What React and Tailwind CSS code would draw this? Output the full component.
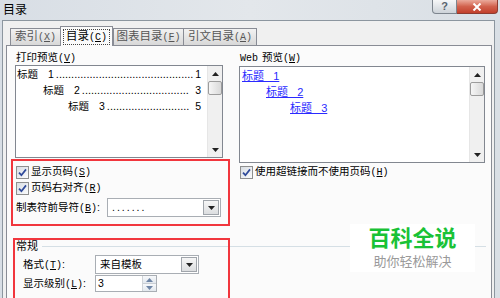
import React from "react";

function Mn({ k }) {
  return (
    <span className="font-['Liberation_Mono',monospace] text-[10px]">
      (<span className="underline">{k}</span>)
    </span>
  );
}

function Check() {
  return (
    <span className="w-[13px] h-[13px] shrink-0 border border-[#8e8f8f] bg-gradient-to-br from-[#d8dde3] to-[#fbfcfd] flex items-center justify-center">
      <svg width="9" height="9" viewBox="0 0 9 9">
        <path d="M1 4.6 L3.4 7.2 L8 1.4" fill="none" stroke="#2f4a9a" strokeWidth="1.7" />
      </svg>
    </span>
  );
}

function Tri({ down = true, color = "#222" }) {
  return (
    <svg width="7" height="4" viewBox="0 0 7 4">
      <path d={down ? "M0 0H7L3.5 4Z" : "M0 4H7L3.5 0Z"} fill={color} />
    </svg>
  );
}

function VScroll() {
  return (
    <div className="w-[15px] shrink-0 bg-[#f0f0f0] border-l border-[#e6e6e6] flex flex-col items-center">
      <div className="h-[15px] flex items-center justify-center">
        <Tri down={false} />
      </div>
      <div className="w-[14px] h-[14px] border border-[#9c9c9c] rounded-[2px] bg-gradient-to-r from-[#f6f6f6] to-[#d9d9d9]" />
      <div className="flex-1" />
      <div className="h-[15px] flex items-center justify-center">
        <Tri />
      </div>
    </div>
  );
}

function Combo({ className, text, textClass = "" }) {
  return (
    <div className={"h-[19px] border border-[#a9aeb4] bg-white flex " + className}>
      <div className={"flex-1 min-w-0 pl-[4px] flex items-center leading-none whitespace-nowrap " + textClass}>{text}</div>
      <div className="w-[16px] m-[1px] border border-[#a0a5ab] bg-gradient-to-b from-[#f6f6f6] to-[#dcdee0] flex items-center justify-center">
        <Tri />
      </div>
    </div>
  );
}

function PreviewRow({ pad, n, page, dots }) {
  return (
    <div className={"flex whitespace-nowrap " + pad}>
      <span>标题</span>
      <span className="ml-[10px]">{n}</span>
      <span className="ml-[2px] text-[11px]">{".".repeat(dots)}</span>
      <span className="ml-auto">{page}</span>
    </div>
  );
}

function Tab({ children, w, active, edge }) {
  if (active) {
    return (
      <div className={"relative z-10 h-[20px] mb-[-1px] border border-b-0 border-[#898c95] bg-[#fbfbfb] flex items-center justify-center " + w}>
        <span className="border border-dotted border-[#444] px-[2px] leading-[13px] text-black">{children}</span>
      </div>
    );
  }
  return (
    <div className={"h-[17px] border-t border-l border-[#898c95] bg-gradient-to-b from-[#f2f2f2] to-[#d8d8d8] flex items-center justify-center text-[#555] " + w + " " + edge}>
      {children}
    </div>
  );
}

export default function App() {
  return (
    <div className="w-[500px] h-[298px] overflow-hidden flex flex-col bg-gradient-to-r from-[#d8dee5] via-[#e3e7eb] to-[#d9dfe5] font-['Liberation_Sans','Noto_Sans_CJK_SC',sans-serif] text-[10.5px] text-black">
      {/* title bar */}
      <div className="h-[20px] shrink-0 flex justify-between">
        <div className="pl-[3px] pt-[3px] leading-[14px] text-[12px]">目录</div>
        <div className="flex pr-[2px] h-[14px]">
          <div className="w-[25px] h-[14px] rounded-bl-[4px] border border-t-0 border-[#7d858e] bg-gradient-to-b from-[#f6f7f8] to-[#cdd3d9] flex items-center justify-center text-[11px] leading-none text-[#59636e] font-bold">
            ?
          </div>
          <div className="w-[41px] h-[14px] rounded-br-[4px] border border-t-0 border-l-0 border-[#8d3b30] bg-gradient-to-b from-[#eaaa9c] via-[#d1614d] to-[#c23f2b] flex items-center justify-center">
            <svg width="10" height="8" viewBox="0 0 10 8">
              <path d="M1.5 0.5 L8.5 7.5 M8.5 0.5 L1.5 7.5" stroke="#fff" strokeWidth="2" />
            </svg>
          </div>
        </div>
      </div>

      {/* dialog body */}
      <div className="flex-1 min-h-0 ml-[2px] w-[493px] border-l border-t border-r border-[#8c969f] bg-[#f0f0f0] flex flex-col">
        {/* tab strip */}
        <div className="h-[24px] shrink-0 flex items-end pl-[7px] text-[11.5px]">
          <Tab w="w-[50px]">
            索引<Mn k="X" />
          </Tab>
          <Tab w="w-[53px]" active>
            目录<Mn k="C" />
          </Tab>
          <Tab w="w-[70px]">
            图表目录<Mn k="F" />
          </Tab>
          <Tab w="w-[74px]" edge="border-r">
            引文目录<Mn k="A" />
          </Tab>
        </div>

        {/* tab panel */}
        <div className="relative ml-[3px] w-[486px] flex-1 border border-[#898c95] bg-[#fbfbfb] flex flex-col">
          <div className="flex">
            {/* left column */}
            <div className="ml-[4px] w-[219px] flex flex-col">
              <div className="pl-[5px] mt-[4px] h-[14px] leading-[14px]">
                打印预览<Mn k="V" />
              </div>
              <div className="ml-[4px] mt-[1px] w-[208px] h-[93px] border border-[#828790] bg-white flex">
                <div className="flex-1 min-w-0 overflow-hidden pl-[1px] pr-[6px] leading-[16px]">
                  <PreviewRow pad="pl-0" n="1" page="1" dots={45} />
                  <PreviewRow pad="pl-[26px]" n="2" page="3" dots={35} />
                  <PreviewRow pad="pl-[51px]" n="3" page="5" dots={27} />
                </div>
                <VScroll />
              </div>
              <div className="mt-[1px] h-[67px] border-2 border-[#f1363d] pl-[3px] pt-[4px] flex flex-col">
                <div className="h-[14px] flex items-center gap-[2px]">
                  <Check />
                  <span className="leading-[14px]">
                    显示页码<Mn k="S" />
                  </span>
                </div>
                <div className="mt-[2px] h-[14px] flex items-center gap-[2px]">
                  <Check />
                  <span className="leading-[14px]">
                    页码右对齐<Mn k="R" />
                  </span>
                </div>
                <div className="mt-[3px] flex items-center">
                  <span className="w-[91px] whitespace-nowrap">
                    制表符前导符<Mn k="B" />:
                  </span>
                  <Combo className="w-[114px]" text="......." textClass="tracking-[2px]" />
                </div>
              </div>
            </div>

            {/* right column */}
            <div className="ml-[9px] w-[246px] flex flex-col">
              <div className="pl-[1px] mt-[4px] h-[14px] leading-[14px]">
                <span className="font-['Liberation_Mono',monospace] text-[10px] mr-[4px]">Web</span>
                预览<Mn k="W" />
              </div>
              <div className="mt-[2px] h-[97px] border border-[#828790] bg-white flex">
                <div className="flex-1 min-w-0 pl-[2px] pt-[1px] leading-[16px] text-[11px] text-[#2a2aff] flex flex-col items-start">
                  <span className="underline whitespace-pre">标题   1</span>
                  <span className="underline whitespace-pre ml-[24px]">标题   2</span>
                  <span className="underline whitespace-pre ml-[48px]">标题   3</span>
                </div>
                <VScroll />
              </div>
              <div className="mt-[2px] pl-[1px] h-[14px] flex items-center gap-[2px]">
                <Check />
                <span className="leading-[14px]">
                  使用超链接而不使用页码<Mn k="H" />
                </span>
              </div>
            </div>
          </div>

          {/* 常规 group */}
          <div className="mt-[12px] flex items-start">
            <div className="ml-[6px] w-[217px] h-[80px] border-2 border-[#f1363d] flex flex-col">
              <div className="h-[12px] flex items-center pl-[1px]">
                <span className="leading-[12px] text-[11px]">常规</span>
                <div className="flex-1 ml-[4px] border-t border-[#d5dfe5]" />
              </div>
              <div className="mt-[3px] pl-[8px] flex items-center">
                <span className="w-[72px] whitespace-nowrap">
                  格式<Mn k="T" />:
                </span>
                <Combo className="w-[104px]" text="来自模板" />
              </div>
              <div className="mt-[1px] pl-[8px] flex items-center">
                <span className="w-[72px] whitespace-nowrap">
                  显示级别<Mn k="L" />:
                </span>
                <div className="w-[62px] h-[17px] border border-[#a9aeb4] bg-white flex">
                  <div className="flex-1 pl-[2px] leading-[15px]">3</div>
                  <div className="w-[14px] flex flex-col border-l border-[#d0d4d8]">
                    <div className="flex-1 bg-gradient-to-b from-[#f7f9fb] to-[#e3e8ee] flex items-center justify-center border-b border-[#c9ced4]">
                      <Tri down={false} color="#6f86a6" />
                    </div>
                    <div className="flex-1 bg-gradient-to-b from-[#f7f9fb] to-[#e3e8ee] flex items-center justify-center">
                      <Tri color="#6f86a6" />
                    </div>
                  </div>
                </div>
              </div>
            </div>
            <div className="flex-1 mt-[8px] mr-[5px] border-t border-[#d5dfe5]" />
          </div>

          {/* watermark */}
          <div className="absolute left-[343px] top-[178px] w-[125px] h-[48px] bg-white flex flex-col items-center">
            <div className="h-[24px] leading-[24px] text-[22px] font-bold text-[#19c236] font-['Noto_Sans_CJK_SC',sans-serif]">
              百科全说
            </div>
            <div className="mt-[5px] h-[16px] leading-[16px] text-[13px] text-[#9a9a9a] font-['Noto_Sans_CJK_SC',sans-serif]">
              助你轻松解决
            </div>
          </div>
        </div>
      </div>
    </div>
  );
}
